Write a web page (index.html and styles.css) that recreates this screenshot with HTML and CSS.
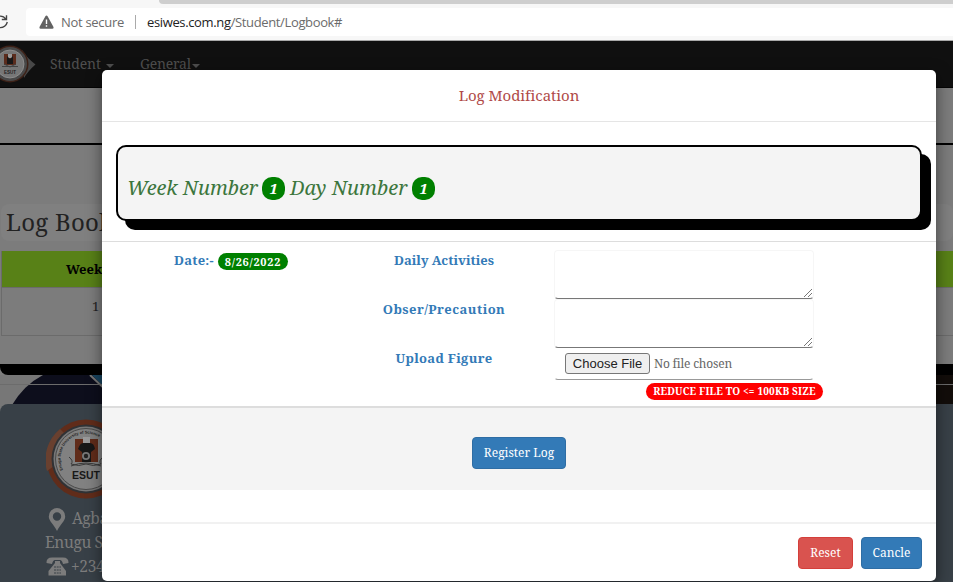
FILE: index.html
```html
<!DOCTYPE html>
<html lang="en">
<head>
<meta charset="utf-8">
<title>Student Logbook</title>
<link rel="stylesheet" href="styles.css">
</head>
<body>
<div class="window">
  <header class="browser">
    <div class="tabstrip"></div>
    <div class="toolbar">
      <svg class="reload" width="26" height="30" viewBox="0 0 26 30"><path d="M6.5 8.2V12.5H1.8M6 12.2A7.3 7.3 0 0 0-7 14.5A7.3 7.3 0 0 0 7.3 15" fill="none" stroke="#444" stroke-width="1.4"/></svg>
      <div class="address">
        <svg class="warn" width="15" height="14" viewBox="0 0 15 14"><path d="M7.5.5Q8.2.5 8.6 1.3L14.5 12Q15 13.8 13.5 13.8H1.5Q0 13.8.5 12L6.4 1.3Q6.8.5 7.5.5Z" fill="#626262"/><path d="M7.5 4.6v4.3M7.5 10.3v1.5" stroke="#fff" stroke-width="1.4"/></svg>
        <span class="insecure">Not secure</span><i class="sep"></i>
        <span class="url"><b>esiwes.com.ng</b>/Student/Logbook#</span>
      </div>
    </div>
  </header>
  <nav class="nav">
    <svg class="nav-logo" width="36" height="46" viewBox="0 0 36 46"><path d="M22 9Q27 17 35.5 23.5Q28 30 24 37Z" fill="#484848"/><circle cx="10" cy="23" r="18.5" fill="#3d2117"/><circle cx="10" cy="23" r="17" fill="#484848"/><circle cx="10" cy="23" r="14" fill="#777" stroke="#999" stroke-width=".7"/><path d="M4 13h12v11H4Z" fill="#5b2c1d"/><path d="M8 13h4v4H8Z" fill="#999"/><path d="M7 15l3 3 3-3v8H7Z" fill="#181818"/><path d="M2 25.5h16M4 23l6 3 6-3" stroke="#444" stroke-width="1" fill="none"/><text x="10" y="33" text-anchor="middle" class="logo-tiny">ESUT</text></svg>
    <span class="nav-item student">Student <i class="caret"></i></span>
    <span class="nav-item general">General<i class="caret"></i></span>
  </nav>
  <div class="subhead"></div>
  <main class="panel">
    <h2 class="panel-title">Log Book</h2>
    <div class="table">
      <div class="table-head">Week</div>
      <div class="table-row">1</div>
    </div>
  </main>
  <div class="strip"></div>
  <section class="photo">
    <svg width="953" height="44" viewBox="0 0 953 44"><path d="M0 0H953V44H0Z" fill="#777"/><path d="M12 30Q24 10 43 0H120V44H12Z" fill="#0d0e1c"/><path d="M92 0H120V18H110Z" fill="#18445f"/><path d="M90 0L108 17" stroke="#777" stroke-width="2"/><path d="M930 0H953V44H930Z" fill="#120d0a"/><path d="M0 9.5H953" stroke="#6c6c6c"/></svg>
  </section>
  <footer class="footer">
    <svg class="seal" width="80" height="80" viewBox="0 0 80 80">
      <circle cx="40" cy="40" r="39.5" fill="#602c1a"/><path d="M1 52A40 40 0 0 1 14 10L22 18A29 29 0 0 0 8 47Z" fill="#69402f"/><circle cx="40" cy="40" r="34.5" fill="#303235"/><circle cx="40" cy="40" r="32.5" fill="#777"/><circle cx="40" cy="40" r="30.5" fill="#818181" stroke="#4a4a4a"/>
      <path id="ring" d="M17 51A25.5 25.5 0 1 1 63 51" fill="none"/>
      <text class="seal-ring"><textPath href="#ring">Enugu State University of Science</textPath></text>
      <path d="M29 20h23v23H29Z" fill="#602c1a"/><path d="M37 18h7v9h-7Z" fill="#999"/><path d="M32 30q2-6 5-6h7q4 0 5 6l-4 3v10h-9V33Z" fill="#171717"/><circle cx="40" cy="37" r="4" fill="#777"/><circle cx="40" cy="37" r="2.2" fill="#222"/><path d="M23 38q5 4 2 7q8 3 15 0q7 3 15 0q-3-3 2-7M25 47q15-6 30 0" fill="none" stroke="#3a3a3a"/>
      <text x="40" y="59.5" text-anchor="middle" class="seal-name">ESUT</text>
    </svg>
    <div class="contact"><svg class="pin" width="18" height="23" viewBox="0 0 18 23"><path fill-rule="evenodd" d="M9 0A8.4 8.4 0 0 1 17.2 8.6C17.2 13 12 17 9 23C6 17 .8 13 .8 8.6A8.4 8.4 0 0 1 9 0ZM9 4.3A4.2 4.2 0 1 0 9 12.7A4.2 4.2 0 1 0 9 4.3Z" fill="#7c7c7c"/></svg><span>Agba</span></div>
    <div class="contact">Enugu S</div>
    <div class="contact"><svg class="phone" width="23" height="19" viewBox="0 0 23 19"><path d="M.5 6Q0 0 7 .4H16Q23 0 22.5 6L17 7Q16 3 14 3H9Q7 3 6 7Z" fill="#7c7c7c"/><path d="M9 4h5v2l6 8v4.5H2.5V14L9 6Z" fill="#7c7c7c"/><path d="M8 10h7M8 13h7M8 16h7" stroke="#384047" stroke-dasharray="2 .7"/></svg><span>+234</span></div>
  </footer>

  <section class="modal">
    <h4 class="modal-title">Log Modification</h4>
    <div class="summary-area">
      <div class="summary"><span class="t-week">Week Number</span><b>1</b><span class="t-day">Day Number</span><b>1</b></div>
    </div>
    <div class="form">
      <div class="date"><span class="label l-date">Date:-</span><span class="pill">8/26/2022</span></div>
      <div class="labels"><span class="label l-daily">Daily Activities</span><span class="label l-obs">Obser/Precaution</span><span class="label l-up">Upload Figure</span></div>
      <div class="fields">
        <div class="area"><svg width="10" height="10" viewBox="0 0 10 10"><path d="M1 9L9 1M5 9L9 5" stroke="#777"/></svg></div>
        <div class="area"><svg width="10" height="10" viewBox="0 0 10 10"><path d="M1 9L9 1M5 9L9 5" stroke="#777"/></svg></div>
        <div class="file"><span class="choose">Choose File</span><span class="nofile">No file chosen</span></div>
        <span class="warning">REDUCE FILE TO &lt;= 100KB SIZE</span>
      </div>
    </div>
    <div class="register"><span class="btn b-reg">Register Log</span></div>
    <div class="actions"><span class="btn red b-reset">Reset</span><span class="btn b-cancel">Cancle</span></div>
  </section>
</div>
</body>
</html>
```
FILE: styles.css
```css
*{box-sizing:border-box}
body{margin:0;font-family:"Noto Serif","Droid Serif","DejaVu Serif Condensed","DejaVu Serif",serif}
svg{display:block;flex:none}
.window{position:relative;width:953px;height:582px;overflow:hidden;background:#7c7c7c}
.browser{height:41px;background:#f7f7f7;border-bottom:1px solid #aaa}
.tabstrip{height:4px;margin-left:159px;background:#cecece;border-radius:0 0 0 4px}
.toolbar{display:flex;height:36px}
.reload{margin-top:3px}
.address{display:flex;align-items:center;width:940px;height:28px;margin-top:4px;padding-left:13px;background:#fff;border-radius:4px 0 0 4px;font:13px "Open Sans",sans-serif;color:#6b6b6b}
.insecure{margin-left:7px;width:63px;white-space:nowrap;letter-spacing:-.3px}
.sep{width:1px;height:14px;margin:0 11px 0 11px;background:#aaa}
.url{letter-spacing:-.36px}
.url b{font-weight:400;color:#222}
.nav{display:flex;height:47px;background:#101010;border-bottom:1px solid #050505;font-size:14px;color:#4e4e4e}
.nav-item{display:flex;align-items:center;height:45px;white-space:nowrap}
.student{margin-left:14px;width:90px;letter-spacing:-.1px}
.general{letter-spacing:-.25px}
.caret{border:4px solid transparent;border-top-color:#4e4e4e;border-bottom:0;margin:4px 0 0 5px}
.general .caret{margin-left:1px}
.logo-tiny{font:bold 4.5px "Liberation Sans",sans-serif;fill:#222}
.subhead{height:57px;border-bottom:2px solid #000}
.panel{height:219px;padding-top:59px}
.panel-title{width:150px;height:37px;margin:0 0 10px 1px;padding-left:5px;background:#808080;border-radius:8px;font-size:24px;font-weight:400;line-height:35px;letter-spacing:.25px;color:#222}
.panel-title{width:auto}
.table{margin-left:1px;border-left:1px solid #6b6b6b}
.table-head{height:37px;padding-left:64px;background:#588117;color:#000;font-size:13px;font-weight:700;line-height:36px;border-bottom:1px solid #6b6b6b}
.table-row{height:48px;padding-left:90px;border-bottom:1px solid #6b6b6b;font-size:13px;line-height:37px;color:#222}
.strip{height:11px;background:#000;border-radius:0 0 0 8px}
.photo{height:29px}
.footer{position:relative;height:178px;padding:15px 0 0 46px;background:#384047;border-radius:8px 0 0 0;color:#7c7c7c;font-size:15.5px}
.seal-ring{font:bold 4px "Liberation Sans",sans-serif;fill:#222}
.seal-name{font:bold 10.5px "Liberation Sans",sans-serif;fill:#181818}
.contact{display:flex;align-items:center;height:24px;margin-left:-1px;gap:2px;white-space:nowrap;letter-spacing:-.35px}
.seal+.contact{margin-top:6px;height:25px}
.pin{margin:4px 4px 0 3px}
.phone{margin-left:1px}
.modal{position:absolute;left:102px;top:70px;width:834px;height:511px;background:#fff;border-radius:5px;box-shadow:0 5px 15px rgba(0,0,0,.5)}
.modal-title{height:52px;margin:0;border-bottom:1px solid #e5e5e5;text-align:center;font-size:15px;font-weight:400;line-height:50px;letter-spacing:-.04px;color:#b04a48}
.summary-area{height:120px;padding:23px 14px 0;border-bottom:1px solid #ddd}
.summary{display:flex;align-items:center;height:76px;padding:9px 0 0 9px;background:#f4f4f4;border:2px solid #000;border-radius:10px;box-shadow:9px 9px #000;color:#3c763d;font-size:20px;font-style:italic;white-space:nowrap}
.summary b{width:23px;height:23px;margin-top:2px;border-radius:10px;background:green;color:#fff;font-size:15px;line-height:22px;text-align:center}
.t-week{width:135px;letter-spacing:-.05px}.t-day{width:127px;padding-left:5px;letter-spacing:.05px}
.form{display:flex;height:166px;border-bottom:2px solid #ddd}
.date{display:flex;width:256px;padding:9px 0 0 72px}
.label{font-size:13px;font-weight:700;line-height:18px;color:#337ab7;white-space:nowrap}
.l-date{width:40px;letter-spacing:.2px}
.l-obs{letter-spacing:.45px}
.l-up{letter-spacing:.3px}
.pill{width:70px;height:17px;margin:2px 0 0 4px;background:green;border-radius:9px;color:#fff;font-size:11px;font-weight:700;line-height:17px;letter-spacing:.72px;text-align:center}
.labels{display:flex;flex-direction:column;align-items:center;gap:31px;width:172px;padding-top:9px}
.fields{display:flex;flex-direction:column;width:293px;margin-left:25px;padding-top:8px}
.area{display:flex;align-items:flex-end;justify-content:flex-end;width:260px;height:49px;margin-left:-1px;border:1px solid #f6f6f6;border-bottom-color:#777;border-radius:4px}
.file{display:flex;align-items:center;width:260px;height:32px;margin-left:-1px;padding-left:10px;border:1px solid #fff;border-bottom:1px solid #999;border-radius:4px}
.choose{width:85px;height:21px;margin-top:-2px;border:1px solid #777;border-radius:3px;background:#efefef;color:#222;font:13px/19px "Liberation Sans",sans-serif;text-align:center}
.nofile{margin:-1px 0 0 4px;color:#666;font-size:12px;letter-spacing:-.2px;white-space:nowrap}
.warning{width:177px;height:17px;margin:3px 0 0 91px;border-radius:9px;background:red;color:#fff;font-size:10px;font-weight:700;line-height:17px;letter-spacing:.17px;text-align:center;white-space:nowrap}
.register{display:flex;justify-content:center;height:82px;padding-top:29px;background:#f4f4f4}
.btn{height:32px;border:1px solid #2e6da4;border-radius:4px;background:#337ab7;color:#fff;font-size:12px;line-height:30px;text-align:center;white-space:nowrap}
.b-reg{width:94px}.b-reset{width:55px}.b-cancel{width:61px}
.red{background:#d9534f;border-color:#d43f3a}
.actions{display:flex;justify-content:flex-end;gap:8px;height:58px;margin-top:32px;padding:13px 14px 0 0;border-top:2px solid #f1f1f1}
```
